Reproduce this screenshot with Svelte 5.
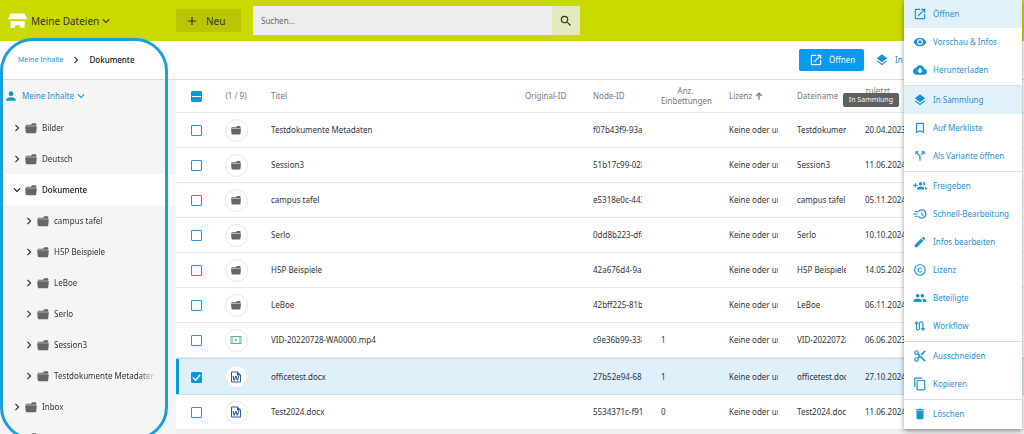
<script lang="ts">
  interface MenuItem { label: string; icon: string; active?: boolean; }
  interface Row {
    type: string; title: string; node: string; count: string; name: string; date: string; checked?: boolean;
  }

  // Material glyphs, 24x24 grid
  const ICONS: Record<string, string> = {
    open: 'M19 19H5V5h7V3H5a2 2 0 0 0-2 2v14a2 2 0 0 0 2 2h14c1.1 0 2-.9 2-2v-7h-2v7zM14 3v2h3.59l-9.83 9.83 1.41 1.41L19 6.41V10h2V3h-7z',
    eye: 'M12 4.5C7 4.5 2.73 7.61 1 12c1.73 4.39 6 7.5 11 7.5s9.27-3.11 11-7.5c-1.73-4.39-6-7.5-11-7.5zM12 17c-2.76 0-5-2.24-5-5s2.24-5 5-5 5 2.24 5 5-2.24 5-5 5zm0-8c-1.66 0-3 1.34-3 3s1.34 3 3 3 3-1.34 3-3-1.34-3-3-3z',
    download: 'M19.35 10.04C18.67 6.59 15.64 4 12 4 9.11 4 6.6 5.64 5.35 8.04 2.34 8.36 0 10.91 0 14c0 3.31 2.69 6 6 6h13c2.76 0 5-2.24 5-5 0-2.64-2.05-4.78-4.65-4.96zM17 13l-5 5-5-5h3V9h4v4h3z',
    layers: 'M11.99 18.54l-7.37-5.73L3 14.07l9 7 9-7-1.63-1.27-7.38 5.74zM12 16l7.36-5.73L21 9l-9-7-9 7 1.63 1.27L12 16z',
    bookmark: 'M17 3H7c-1.1 0-2 .9-2 2v16l7-3 7 3V5c0-1.1-.9-2-2-2zm0 15l-5-2.18L7 18V5h10v13z',
    split: 'M14 4l2.29 2.29-2.88 2.88 1.42 1.42 2.88-2.88L20 10V4zm-4 0H4v6l2.29-2.29 4.71 4.7V20h2v-8.41l-5.29-5.3z',
    groupAdd: 'M8 10H5V7H3v3H0v2h3v3h2v-3h3v-2zm10 1c1.66 0 2.99-1.34 2.99-3S19.66 5 18 5c-.32 0-.63.05-.91.14.57.81.9 1.79.9 2.86s-.34 2.04-.9 2.86c.28.09.59.14.91.14zm-5 0c1.66 0 2.99-1.34 2.99-3S14.66 5 13 5c-1.66 0-3 1.34-3 3s1.34 3 3 3zm6.62 2.16c.83.73 1.38 1.66 1.38 2.84v2h3v-2c0-1.54-2.37-2.49-4.38-2.84zM13 13c-2 0-6 1-6 3v2h12v-2c0-2-4-3-6-3z',
    fast: 'M15 4a8 8 0 0 0-7.4 5h2.2A6 6 0 1 1 9.8 15H7.6A8 8 0 1 0 15 4zm-1 4v5l3.6 3.2 1.2-1.4-3-2.6V8zM3 7h6v1.8H3zM0 11h7.5v1.8H0zM3 15h6v1.8H3z',
    edit: 'M3 17.25V21h3.75L17.81 9.94l-3.75-3.75L3 17.25zM20.71 7.04a1 1 0 0 0 0-1.41l-2.34-2.34a1 1 0 0 0-1.41 0l-1.83 1.83 3.75 3.75 1.83-1.83z',
    license: 'M10.08 10.86c.05-.33.16-.62.3-.87s.34-.46.59-.62c.24-.15.54-.22.91-.23.23.01.44.05.63.13.2.09.38.21.52.36s.25.33.34.53.13.42.14.64h1.79c-.02-.47-.11-.9-.28-1.29s-.4-.73-.7-1.01-.66-.5-1.08-.66-.88-.23-1.39-.23c-.65 0-1.22.11-1.7.34s-.88.53-1.2.92-.56.84-.71 1.36S8 11.29 8 11.87v.27c0 .58.08 1.12.23 1.64s.39.97.71 1.35.72.69 1.2.91 1.05.34 1.7.34c.47 0 .91-.08 1.32-.23s.77-.36 1.08-.63.56-.58.74-.94.29-.74.3-1.15h-1.79c-.01.21-.06.4-.15.58s-.21.33-.36.46-.32.23-.52.3c-.19.07-.39.09-.6.1-.36-.01-.66-.08-.89-.23-.25-.16-.45-.37-.59-.62s-.25-.55-.3-.88-.08-.67-.08-1v-.27c0-.35.03-.68.08-1.01zM12 2C6.48 2 2 6.48 2 12s4.48 10 10 10 10-4.48 10-10S17.52 2 12 2zm0 18c-4.41 0-8-3.59-8-8s3.59-8 8-8 8 3.59 8 8-3.59 8-8 8z',
    group: 'M16 11c1.66 0 2.99-1.34 2.99-3S17.66 5 16 5s-3 1.34-3 3 1.34 3 3 3zm-8 0c1.66 0 2.99-1.34 2.99-3S9.66 5 8 5 5 6.34 5 8s1.34 3 3 3zm0 2c-2.33 0-7 1.17-7 3.5V19h14v-2.5c0-2.33-4.67-3.5-7-3.5zm8 0c-.29 0-.62.02-.97.05 1.16.84 1.97 1.97 1.97 3.45V19h6v-2.5c0-2.33-4.67-3.5-7-3.5z',
    workflow: 'M2 8l4-4.500L10 8H7v8a1.500 1.500 0 0 0 3 0V8a4 4 0 0 1 8 0v8h3l-4 4.500L13 16h3V8a2 2 0 0 0-4 0v8a3.500 3.500 0 0 1-7 0V8z',
    cut: 'M9.64 7.64c.23-.5.36-1.05.36-1.64 0-2.21-1.79-4-4-4S2 3.79 2 6s1.79 4 4 4c.59 0 1.14-.13 1.64-.36L10 12l-2.36 2.36C7.14 14.13 6.59 14 6 14c-2.21 0-4 1.79-4 4s1.79 4 4 4 4-1.79 4-4c0-.59-.13-1.14-.36-1.64L12 14l7 7h3v-1L9.64 7.64zM6 8c-1.1 0-2-.89-2-2s.9-2 2-2 2 .89 2 2-.9 2-2 2zm0 12c-1.1 0-2-.89-2-2s.9-2 2-2 2 .89 2 2-.9 2-2 2zm6-7.5c-.28 0-.5-.22-.5-.5s.22-.5.5-.5.5.22.5.5-.22.5-.5.5zM19 3l-6 6 2 2 7-7V3z',
    copy: 'M16 1H4c-1.1 0-2 .9-2 2v14h2V3h12V1zm3 4H8c-1.1 0-2 .9-2 2v14c0 1.1.9 2 2 2h11c1.1 0 2-.9 2-2V7c0-1.1-.9-2-2-2zm0 16H8V7h11v14z',
    trash: 'M6 19c0 1.1.9 2 2 2h8c1.1 0 2-.9 2-2V7H6v12zM19 4h-3.5l-1-1h-5l-1 1H5v2h14V4z',
    person: 'M12 12c2.21 0 4-1.79 4-4s-1.79-4-4-4-4 1.79-4 4 1.79 4 4 4zm0 2c-2.67 0-8 1.34-8 4v2h16v-2c0-2.66-5.33-4-8-4z',
    search: 'M15.5 14h-.79l-.28-.27A6.47 6.47 0 0 0 16 9.5 6.5 6.5 0 1 0 9.5 16c1.61 0 3.09-.59 4.23-1.57l.27.28v.79l5 4.99L20.49 19l-4.99-5zm-6 0C7.01 14 5 11.99 5 9.5S7.01 5 9.5 5 14 7.01 14 9.5 11.99 14 9.5 14z',
    plus: 'M19 13h-6v6h-2v-6H5v-2h6V5h2v6h6v2z',
    down: 'M7.41 8.59L12 13.17l4.59-4.58L18 10l-6 6-6-6z',
    right: 'M8.59 16.59L13.17 12 8.59 7.41 10 6l6 6-6 6z',
    up: 'M10.500 21V8.500L6 13l-2-2 8-8 8 8-2 2-4.500-4.500V21z',
    folder: 'M2 9h20l-1 10a2 2 0 0 1-2 2H5a2 2 0 0 1-2-2zM3 8.200V6.500h9L14 4h6a1 1 0 0 1 1 1v3.200z',
    video: 'M1 4v16h22V4zm2 2h18v12H3zM4 7h2v2H4zm0 8h2v2H4zm14-8h2v2h-2zm0 8h2v2h-2zM4 11h2v2H4zm14 0h2v2h-2zM10 9v6l5-3z',
    word: 'M4 1a2 2 0 0 0-2 2v18a2 2 0 0 0 2 2h16a2 2 0 0 0 2-2V8l-7-7zm0 2h10v6h6v12H4zM5 10l2 9h2.700l2-6 1.800 6H16l2.500-9h-2.200L15 16l-2-6h-2.500L8.700 16 7.300 10z',
    logo: 'M3 3h17l3 7H0zM3 12h17v8h-5l-1-3H9l-1 3H3z'
  };

  const groups: MenuItem[][] = [
    [
      { label: 'Öffnen', icon: 'open', active: true },
      { label: 'Vorschau & Infos', icon: 'eye' },
      { label: 'Herunterladen', icon: 'download' }
    ],
    [
      { label: 'In Sammlung', icon: 'layers', active: true },
      { label: 'Auf Merkliste', icon: 'bookmark' },
      { label: 'Als Variante öffnen', icon: 'split' }
    ],
    [
      { label: 'Freigeben', icon: 'groupAdd' },
      { label: 'Schnell-Bearbeitung', icon: 'fast' },
      { label: 'Infos bearbeiten', icon: 'edit' },
      { label: 'Lizenz', icon: 'license' },
      { label: 'Beteiligte', icon: 'group' },
      { label: 'Workflow', icon: 'workflow' }
    ],
    [
      { label: 'Ausschneiden', icon: 'cut' },
      { label: 'Kopieren', icon: 'copy' }
    ],
    [{ label: 'Löschen', icon: 'trash' }]
  ];

  const tree = [
    { name: 'Bilder', level: 0 },
    { name: 'Deutsch', level: 0 },
    { name: 'Dokumente', level: 0, open: true },
    { name: 'campus tafel', level: 1 },
    { name: 'H5P Beispiele', level: 1 },
    { name: 'LeBoe', level: 1 },
    { name: 'Serlo', level: 1 },
    { name: 'Session3', level: 1 },
    { name: 'Testdokumente Metadaten', level: 1 },
    { name: 'Inbox', level: 0 },
    { name: 'Mathematik', level: 0 }
  ];

  let rows: Row[] = $state([
    { type: 'folder', title: 'Testdokumente Metadaten', node: 'f07b43f9-93a', count: '', name: 'Testdokumen', date: '20.04.2023' },
    { type: 'folder', title: 'Session3', node: '51b17c99-028', count: '', name: 'Session3', date: '11.06.2024' },
    { type: 'folder', title: 'campus tafel', node: 'e5318e0c-443', count: '', name: 'campus tafel', date: '05.11.2024' },
    { type: 'folder', title: 'Serlo', node: '0dd8b223-df4', count: '', name: 'Serlo', date: '10.10.2024' },
    { type: 'folder', title: 'H5P Beispiele', node: '42a676d4-9a', count: '', name: 'H5P Beispiele', date: '14.05.2024' },
    { type: 'folder', title: 'LeBoe', node: '42bff225-81b', count: '', name: 'LeBoe', date: '06.11.2024' },
    { type: 'video', title: 'VID-20220728-WA0000.mp4', node: 'c9e36b99-338', count: '1', name: 'VID-20220728', date: '06.06.2023' },
    { type: 'word', title: 'officetest.docx', node: '27b52e94-68', count: '1', name: 'officetest.doc', date: '27.10.2024', checked: true },
    { type: 'word', title: 'Test2024.docx', node: '5534371c-f91', count: '0', name: 'Test2024.doc', date: '11.06.2024' }
  ]);

  let query = $state('');
  const selected = $derived(rows.filter((r) => r.checked).length);

  function toggleAll() {
    const next = selected < rows.length;
    rows.forEach((r) => (r.checked = next));
  }
</script>

{#snippet icon(name: string)}
  <svg class="icon icon--{name}" viewBox="0 0 24 24" aria-hidden="true"><path fill-rule="evenodd" d={ICONS[name]} /></svg>
{/snippet}

<div class="app">
  <header class="top">
    <button class="top__scope">
      {@render icon('logo')}
      <span>Meine Dateien</span>
      {@render icon('down')}
    </button>
    <button class="top__new">{@render icon('plus')}<span>Neu</span></button>
    <form class="search" onsubmit={(e) => e.preventDefault()}>
      <input class="search__input" type="text" placeholder="Suchen..." aria-label="Suchen" bind:value={query} />
      <button class="search__btn" aria-label="Suche starten">{@render icon('search')}</button>
    </form>
  </header>

  <div class="bar">
    <nav class="crumbs">
      <a href="#home">Meine Inhalte</a>
      {@render icon('right')}
      <span class="crumbs__cur">Dokumente</span>
    </nav>
    <div class="bar__actions">
      <button class="btn btn--primary">{@render icon('open')}<span>Öffnen</span></button>
      <button class="btn">{@render icon('layers')}<span>In Sammlung</span></button>
    </div>
  </div>

  <div class="body">
    <aside class="side">
      <button class="side__root">{@render icon('person')}<span>Meine Inhalte</span>{@render icon('down')}</button>
      {#each tree as node}
        <button class="node" class:node--sub={node.level === 1} class:node--open={node.open}>
          {@render icon(node.open ? 'down' : 'right')}
          {@render icon('folder')}
          <span class="node__name">{node.name}</span>
        </button>
      {/each}
    </aside>

    <main class="list">
      <table>
        <colgroup>
          <col class="c-check" /><col class="c-type" /><col />
          <col class="c-id" /><col class="c-id" /><col class="c-id" /><col class="c-id" /><col class="c-id" />
          <col class="c-date" />
        </colgroup>
        <thead>
          <tr>
            <th class="check">
              <input type="checkbox" aria-label="Alle auswählen" checked={selected === rows.length}
                indeterminate={selected > 0 && selected < rows.length} onchange={toggleAll} />
            </th>
            <th class="type">({selected} / {rows.length})</th>
            <th class="title">Titel</th>
            <th>Original-ID</th>
            <th>Node-ID</th>
            <th class="center">Anz. Einbettungen</th>
            <th><span class="sort">Lizenz {@render icon('up')}</span></th>
            <th>Dateiname</th>
            <th>zuletzt<br />geändert</th>
          </tr>
        </thead>
        <tbody>
          {#each rows as row}
            <tr class:sel={row.checked}>
              <td class="check"><input type="checkbox" aria-label={row.title} bind:checked={row.checked} /></td>
              <td class="type"><span class="badge">{@render icon(row.type)}</span></td>
              <td class="title"><div class="clip">{row.title}</div></td>
              <td></td>
              <td><div class="clip">{row.node}</div></td>
              <td><div class="clip">{row.count}</div></td>
              <td><div class="clip">Keine oder un</div></td>
              <td><div class="clip">{row.name}</div></td>
              <td><div class="clip">{row.date}</div></td>
            </tr>
          {/each}
        </tbody>
      </table>
    </main>
  </div>

  <div class="marker"></div>
  <div class="tip" role="tooltip">In Sammlung</div>

  <div class="menu" role="menu">
    {#each groups as group}
      <div class="menu__group">
        {#each group as item}
          <button class="menu__item" class:active={item.active} role="menuitem">
            {@render icon(item.icon)}<span>{item.label}</span>
          </button>
        {/each}
      </div>
    {/each}
  </div>
</div>

<style>
  :global(body) { margin:0; }

  .app {
    --blue:#0b96e0; --link:#1c93d1; --line:#e8e8e8;
    position:relative; display:flex; flex-direction:column; height:100vh; overflow:hidden;
    background:#f0f0f0; color:#333; font-family:'Noto Sans',sans-serif; font-size:8px; line-height:12px;
  }
  button { display:flex; align-items:center; margin:0; padding:0; border:0; background:none; color:inherit; font:inherit; cursor:pointer; white-space:nowrap; }
  .icon { flex:none; width:14px; height:14px; fill:currentColor; }

  /* Header */
  .top { flex:none; display:flex; align-items:center; height:41px; background:#cad900; color:#333; }
  .top__scope { width:176px; padding-left:8px; font-size:10px; box-sizing:border-box; }
  .top__scope .icon--logo { width:20px; height:20px; margin-right:3px; color:#fff; }
  .top__new { width:65px; height:23px; padding-left:9px; gap:7px; background:#b9c600; font-size:10px; box-sizing:border-box; }
  .search { display:flex; width:327px; height:29px; margin-left:12px; }
  .search__input { flex:1; min-width:0; padding:0 8px; border:0; background:#ededed; color:#555; font:inherit; outline:none; }
  .search__input::placeholder { color:#666; opacity:1; }
  .search__btn { width:28px; justify-content:center; background:#e5eabd; }

  /* Breadcrumb bar */
  .bar { flex:none; display:flex; align-items:center; justify-content:space-between; height:39px; background:#fff; box-sizing:border-box; border-bottom:1px solid #ddd; }
  .crumbs { display:flex; align-items:center; gap:6px; padding-left:18px; }
  .crumbs a { color:var(--link); font-size:7px; text-decoration:none; }
  .crumbs__cur { color:#111; font-weight:500; }
  .bar__actions { display:flex; width:225px; gap:11px; }
  .btn { height:22px; gap:6px; color:var(--link); }
  .btn--primary { flex:none; width:65px; padding-left:10px; border-radius:2px; background:#0a9af0; color:#fff; box-sizing:border-box; }

  .body { flex:1; min-height:0; display:flex; }

  /* Folder tree */
  .side { flex:none; width:176px; overflow:hidden; background:#f5f5f5; }
  .side__root { height:32px; padding-left:4px; gap:4px; color:var(--link); }
  .side__root .icon--down { margin-left:-4px; }
  .node { width:100%; height:31px; padding:0 20px 0 10px; box-sizing:border-box; }
  .node--sub { padding-left:22px; }
  .node--open { background:#fff; color:#111; font-weight:500; }
  .node .icon--folder { margin-right:4px; color:#666; }
  .node__name { flex:1; min-width:0; overflow:hidden; text-align:left; mask-image:linear-gradient(to left,transparent,#000 16px); }

  /* File table */
  .list { flex:1; min-width:0; }
  table { width:100%; table-layout:fixed; border-collapse:separate; border-spacing:0; background:#fff; }
  .c-check { width:40px; }
  .c-type { width:40px; }
  .c-id { width:68px; }
  .c-date { width:159px; }
  th, td { padding:0 19px 0 0; border-bottom:1px solid var(--line); box-sizing:border-box; }
  th { height:33px; color:#777; font-weight:400; line-height:10px; text-align:left; }
  td { height:35px; }
  .title { padding-left:15px; }
  .center { text-align:center; }
  .check, .type { padding:0; text-align:center; }
  .clip { overflow:hidden; white-space:nowrap; }
  .sort { display:flex; align-items:center; gap:2px; }
  .sort .icon { width:10px; height:10px; }
  .badge { display:inline-flex; align-items:center; justify-content:center; width:21px; height:21px; border:1px solid #e6e6e6; border-radius:50%; background:#fff; color:#666; vertical-align:middle; }
  .badge .icon { width:12px; height:12px; }
  .badge .icon--video { color:#5cb67f; }
  .badge .icon--word { color:#2b5797; }
  .sel td { height:37px; border-top:1px solid #c5dde8; border-color:#c5dde8; background:#def0fa; }
  .sel td:first-child { box-shadow:inset 3px 0 0 var(--blue); }

  input[type='checkbox'] { appearance:none; display:inline-block; width:11px; height:11px; margin:0; border:1px solid #1f96dc; border-radius:1px; background:#fff center / 9px 9px no-repeat; vertical-align:middle; }
  input[type='checkbox']:indeterminate { background:linear-gradient(#fff,#fff) center / 9px 1px no-repeat var(--blue); border-color:var(--blue); }
  input[type='checkbox']:checked { border-color:var(--blue); background-color:var(--blue); background-image:url("data:image/svg+xml,%3Csvg xmlns='http://www.w3.org/2000/svg' viewBox='0 0 10 10'%3E%3Cpath d='M1 5l3 3 5-6' fill='none' stroke='white' stroke-width='1.5'/%3E%3C/svg%3E"); }

  /* Overlays */
  .marker { position:absolute; top:38px; left:0; width:168px; height:402px; border:3px solid #1b9fdb; border-radius:33px; box-sizing:border-box; pointer-events:none; }
  .tip { position:absolute; top:93px; right:125px; padding:1px 6px; border-radius:2px; background:#606060; color:#fff; font-size:7px; }
  .menu { position:absolute; top:0; right:2px; width:118px; background:#fff; box-shadow:0 2px 5px rgba(0,0,0,.4); }
  .menu__group { padding-bottom:1px; }
  .menu__group + .menu__group { border-top:1px solid #ddd; }
  .menu__item { width:100%; height:28px; padding-left:9px; gap:6px; color:var(--link); }
  .menu__item.active { background:#e1f1fa; }
</style>
